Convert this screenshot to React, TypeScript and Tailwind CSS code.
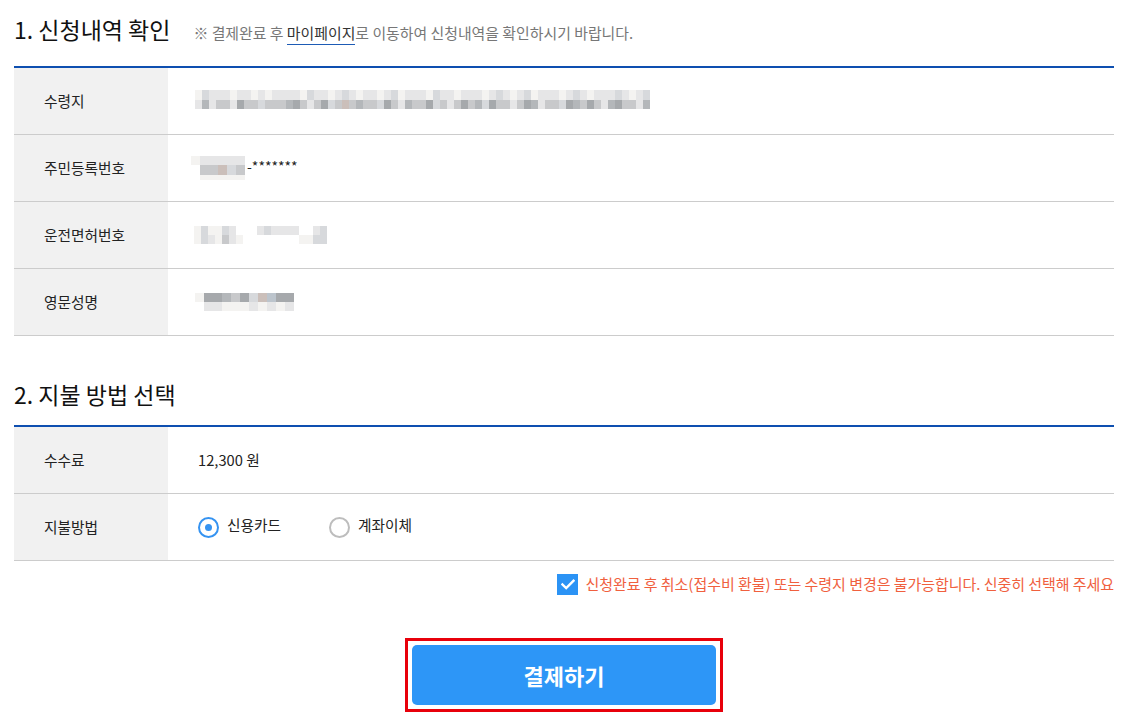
import { ReactNode } from 'react'

// shade palette for the mosaic (blurred personal data)
const shades: Record<string, string> = {
  '0': 'bg-[#f4f3f1]',
  '1': 'bg-[#e6e6e7]',
  '2': 'bg-[#d7d9dc]',
  '3': 'bg-[#c8c9cb]',
  '4': 'bg-[#b4b7ba]',
  '5': 'bg-[#a6a9ac]',
  '6': 'bg-[#cbbfba]',
  '7': 'bg-[#bcc4cc]',
  '.': 'bg-transparent'
}

const heights: Record<string, string> = {
  '5': 'h-[5px]',
  '9': 'h-[9px]',
  '10': 'h-[10px]'
}

const widths: Record<string, string> = {
  '7': 'w-[7px]',
  '9': 'w-[9px]'
}

function Mosaic({ rows, bw }: { rows: [string, string][], bw: string }) {
  return (
    <div className="flex flex-col">
      {rows.map(([h, s], i) => (
        <div key={i} className="flex">
          {s.split('').map((c, j) => (
            <div key={j} className={`${widths[bw]} ${heights[h]} ${shades[c]}`} />
          ))}
        </div>
      ))}
    </div>
  )
}

function Row({ label, children }: { label: string, children: ReactNode }) {
  return (
    <div className="flex h-[67px] border-b border-[#cccccc]">
      <div className="w-[154px] shrink-0 bg-[#f1f1f1] flex items-center pl-[30px] text-[14.7px] text-[#222]">
        {label}
      </div>
      <div className="flex-1 flex items-center pl-[30px] text-[14.7px] text-[#222]">
        {children}
      </div>
    </div>
  )
}

function Radio({ checked, label }: { checked?: boolean, label: string }) {
  return (
    <label className="flex items-center gap-[8px]">
      <span
        className={
          checked
            ? 'w-[21px] h-[21px] rounded-full border-2 border-[#3593f1] flex items-center justify-center'
            : 'w-[21px] h-[21px] rounded-full border-2 border-[#bdbdbd]'
        }
      >
        {checked && <span className="w-[7px] h-[7px] rounded-full bg-[#3593f1]" />}
      </span>
      <span className="-mt-[4px]">{label}</span>
    </label>
  )
}

export default function App() {
  return (
    <div className="w-[1127px] h-[721px] bg-white px-[14px] pr-[13px] font-['Noto_Sans_CJK_KR',sans-serif] text-[#222] overflow-hidden">
      <div className="flex items-baseline pt-[14px] pb-[22px]">
        <h2 className="text-[23px] leading-[30px] font-normal text-[#111]">1. 신청내역 확인</h2>
        <p className="ml-[23px] text-[14.9px] text-[#777]">
          ※ 결제완료 후{' '}
          <span className="text-[#333] border-b border-[#1d5bb5] pb-[1px]">마이페이지</span>로 이동하여 신청내역을 확인하시기 바랍니다.
        </p>
      </div>

      <div className="border-t-2 border-[#0e4fb0]">
        <Row label="수령지">
          <div className="-ml-[3px] -mt-[3px]">
            <Mosaic
              bw="7"
              rows={[
                ['10', '02111011010111102110121011012011102110111012101201110121011121012'],
                ['9', '14133153323334531352363433253143352313534253313541332543531453314']
              ]}
            />
          </div>
        </Row>
        <Row label="주민등록번호">
          <div className="flex items-center -ml-[7px]">
            <Mosaic
              bw="9"
              rows={[
                ['9', '011111'],
                ['10', '.33623'],
                ['5', '.00000']
              ]}
            />
            <span className="ml-[2px] -mt-[4px] text-[14px]">-*******</span>
          </div>
        </Row>
        <Row label="운전면허번호">
          <div className="-ml-[4px]">
            <Mosaic
              bw="7"
              rows={[
                ['9', '020021...121111..12.'],
                ['9', '0210310........0022.']
              ]}
            />
          </div>
        </Row>
        <Row label="영문성명">
          <div className="-ml-[3px]">
            <Mosaic
              bw="9"
              rows={[
                ['9', '05543526755'],
                ['9', '.1100010101']
              ]}
            />
          </div>
        </Row>
      </div>

      <h2 className="text-[23px] leading-[30px] font-normal text-[#111] pt-[43px] pb-[16px]">2. 지불 방법 선택</h2>

      <div className="border-t-2 border-[#0e4fb0]">
        <Row label="수수료">12,300 원</Row>
        <Row label="지불방법">
          <div className="flex items-center gap-[48px]">
            <Radio checked label="신용카드" />
            <Radio label="계좌이체" />
          </div>
        </Row>
      </div>

      <div className="flex items-center justify-end gap-[7px] pt-[13px]">
        <span className="w-[21px] h-[21px] bg-[#2b93f5] flex items-center justify-center">
          <svg width="14" height="11" viewBox="0 0 14 11" fill="none">
            <path d="M1.5 5.5 L5.2 9 L12.5 1.8" stroke="white" strokeWidth="2.4" strokeLinecap="square" />
          </svg>
        </span>
        <span className="text-[15px] tracking-[-0.05px] text-[#f0603e] -mt-[2px]">
          신청완료 후 취소(접수비 환불) 또는 수령지 변경은 불가능합니다. 신중히 선택해 주세요
        </span>
      </div>

      <div className="flex justify-center pt-[43px]">
        <div className="border-[3px] border-[#e8000b] p-[4px]">
          <button className="w-[304px] h-[60px] rounded-[5px] bg-[#2d96f7] text-white text-[22px] font-bold">
            결제하기
          </button>
        </div>
      </div>
    </div>
  )
}
